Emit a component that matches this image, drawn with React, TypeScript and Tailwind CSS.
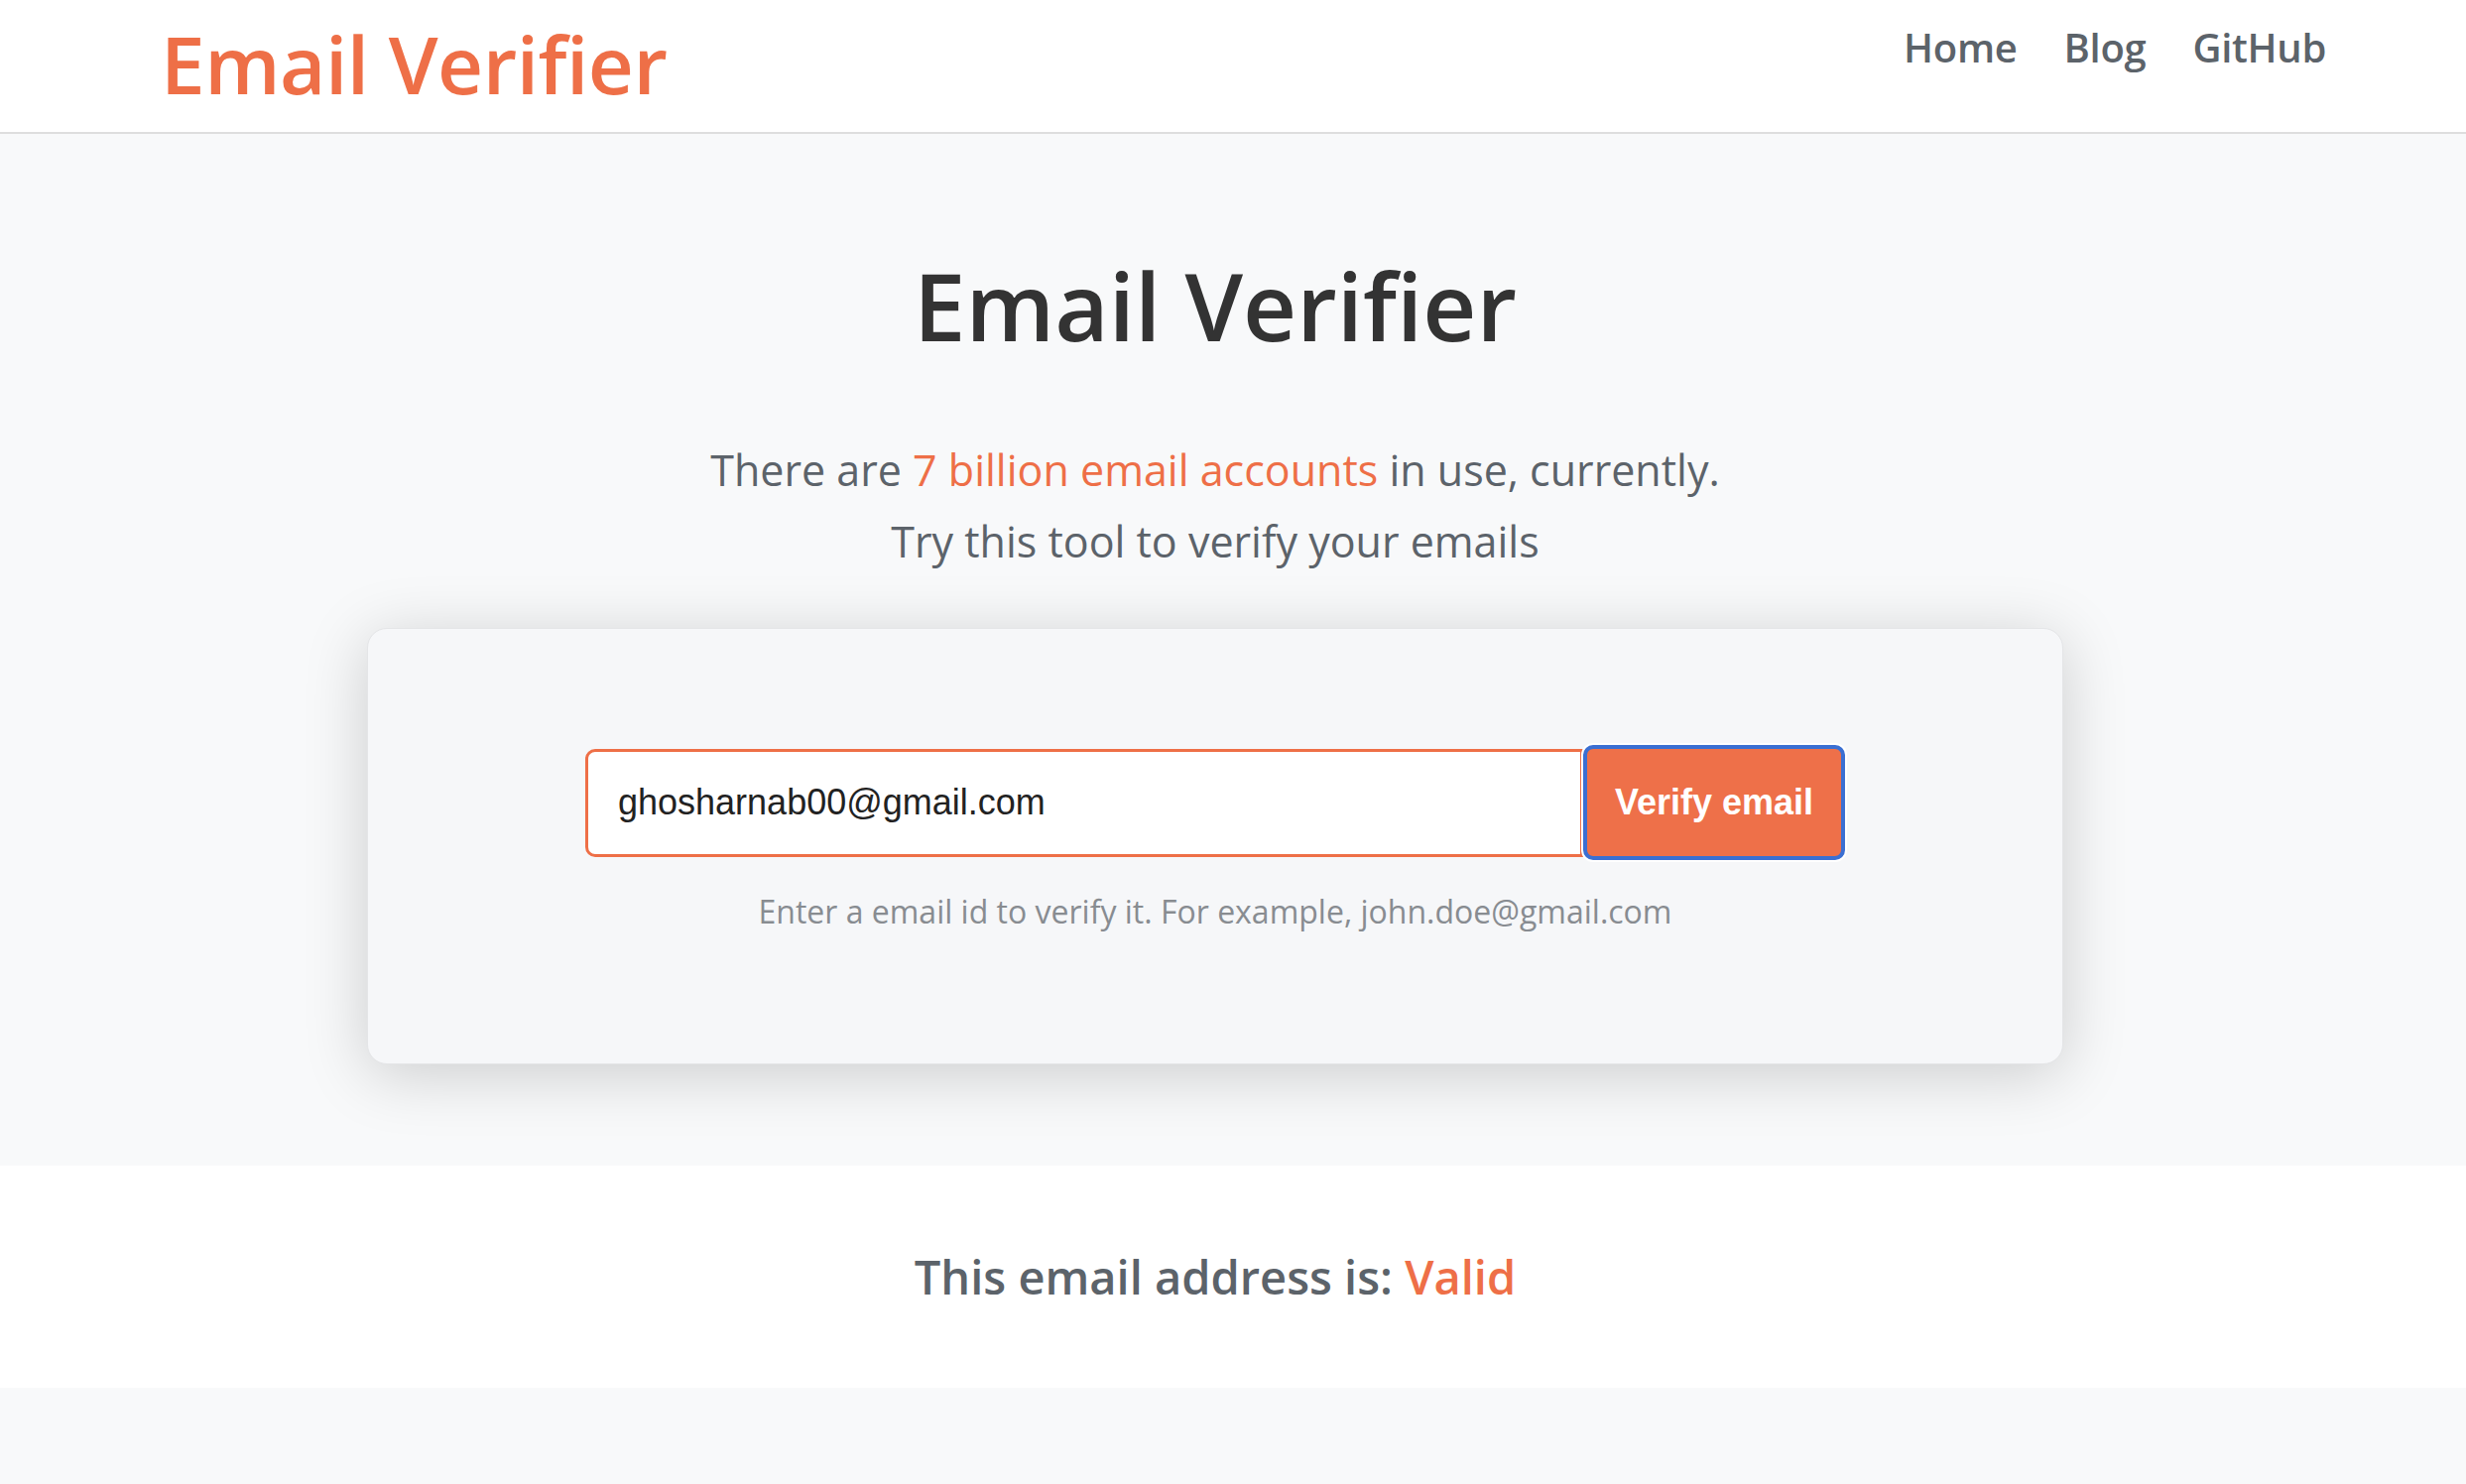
import React from "react";

export default function App() {
  return (
    <div className="min-h-[1496px] bg-[#f8f9fa] font-['Open_Sans',sans-serif]">
      <header className="h-[135px] bg-white border-b-2 border-[#dedede] flex items-start justify-between pl-[162px] pr-[141px]">
        <div className="mt-[24px] text-[80px] leading-[80px] font-semibold text-[#ee6f47] tracking-[-0.5px]">
          Email Verifier
        </div>
        <nav className="mt-[28px] flex gap-[47px] text-[40px] leading-[40px] font-semibold text-[#5c636a] tracking-[-0.3px]">
          <a>Home</a>
          <a>Blog</a>
          <a>GitHub</a>
        </nav>
      </header>

      <main className="pr-[36px] pt-[125px] pb-[102px] flex flex-col items-center">
        <h1 className="text-[94px] leading-[96px] font-semibold text-[#333333]">Email Verifier</h1>
        <p className="mt-[82px] text-[43px] leading-[72px] font-medium text-[#5c636a] text-center">
          There are <span className="text-[#ee6f47]">7 billion email accounts</span> in use, currently.
          <br />
          Try this tool to verify your emails
        </p>
        <div className="mt-[51px] w-[1710px] h-[440px] rounded-[20px] border border-[#e4e5e7] bg-[#f6f7f9] shadow-[0_10px_64px_rgba(0,0,0,0.18)] flex flex-col items-center pt-[117px]">
          <div className="flex items-center">
            <input
              readOnly
              value="ghosharnab00@gmail.com"
              className="w-[1006px] h-[109px] bg-white border-[3px] border-[#ee6f47] rounded-l-[10px] pl-[30px] text-[36px] text-[#222222] font-['Liberation_Sans',Arial,sans-serif] outline-none"
            />
            <button className="w-[264px] h-[116px] bg-[#ee7049] border-[4px] border-[#3b6fd2] rounded-[10px] text-white text-[36px] font-bold font-['Liberation_Sans',Arial,sans-serif] ring-2 ring-white">
              Verify email
            </button>
          </div>
          <p className="mt-[28px] text-[32px] leading-[48px] text-[#888c91]">
            Enter a email id to verify it. For example, john.doe@gmail.com
          </p>
        </div>
      </main>

      <section className="bg-white py-[76px] pr-[36px] text-center">
        <p className="text-[47px] leading-[72px] font-semibold text-[#5c636a]">
          This email address is: <span className="text-[#ee6f47]">Valid</span>
        </p>
      </section>
    </div>
  );
}
